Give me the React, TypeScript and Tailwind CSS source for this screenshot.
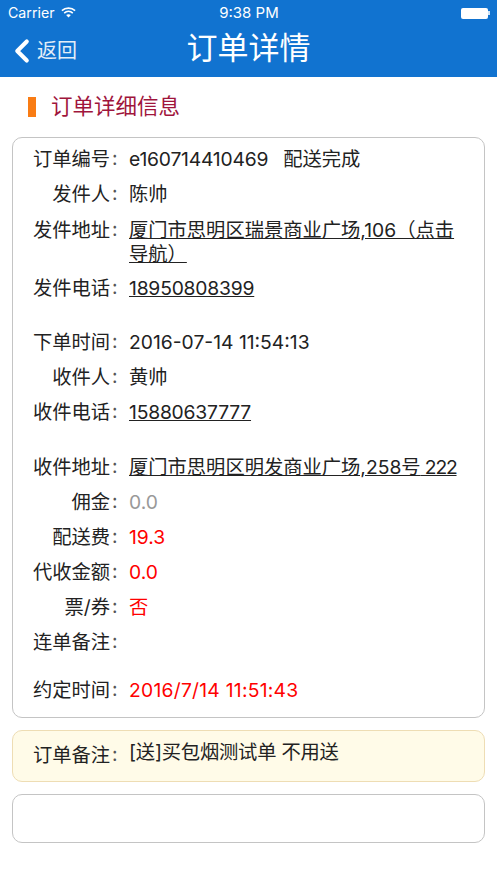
import { ChevronLeft } from 'lucide-react'

const font = "font-['Inter','Noto_Sans_CJK_SC',sans-serif]"

type RowProps = {
  label: string
  children?: React.ReactNode
  className?: string
}

function Row({ label, children, className = '' }: RowProps) {
  return (
    <div className={`flex text-[19.3px] leading-[24px] text-[#222] ${className}`}>
      <div className="w-[88px] shrink-0 text-right whitespace-nowrap">{label}</div>
      <div className="w-[19px] shrink-0 pl-[2px] text-[#555] -translate-y-[1px]">:</div>
      <div className="w-[336px]">{children}</div>
    </div>
  )
}

function Wifi() {
  return (
    <svg width="15" height="11" viewBox="0 0 16 12" fill="none" stroke="white" strokeWidth="1.7">
      <path d="M0.8 4 C4.8 0.3 11.2 0.3 15.2 4" />
      <path d="M3.3 6.6 C6 4.2 10 4.2 12.7 6.6" />
      <path d="M8 11.5 L5.4 8.8 C7 7.6 9 7.6 10.6 8.8 Z" fill="white" stroke="none" />
    </svg>
  )
}

export default function App() {
  return (
    <div className={`w-[497px] h-[883px] bg-white overflow-hidden ${font}`}>
      <header className="h-[77px] bg-[#1173d0] text-white">
        <div className="h-[26px] grid grid-cols-[1fr_auto_1fr] items-center pl-[8px] pr-[7px] text-[14.2px]">
          <div className="flex items-center gap-[6px]">
            <span>Carrier</span>
            <Wifi />
          </div>
          <span className="text-[15px]">9:38 PM</span>
          <div className="flex items-center justify-end">
            <div className="w-[27px] h-[11px] rounded-[2px] bg-white" />
            <div className="w-[2px] h-[4px] bg-white/80" />
          </div>
        </div>
        <div className="relative h-[51px] flex items-center justify-center">
          <div className="absolute left-[7px] top-[6px] flex items-center">
            <ChevronLeft size={38} strokeWidth={2.6} className="-ml-[4px]" />
            <span className="-ml-[4px] text-[20px] leading-[24px] text-[#e4eef8]">返回</span>
          </div>
          <h1 className="text-[31px] leading-[40px] font-normal -mt-[8px]">订单详情</h1>
        </div>
      </header>

      <div className="h-[60px] flex items-center pl-[28px]">
        <div className="w-[8px] h-[20px] bg-[#f97c14]" />
        <h2 className="ml-[15px] -mt-[2px] text-[21.5px] leading-[28px] font-normal text-[#a0153c]">订单详细信息</h2>
      </div>

      <section className="mx-[12px] h-[581px] rounded-[10px] border border-[#c4c4c4] pt-[9px] pl-[9px]">
        <Row label="订单编号">
          <span className="tracking-[-0.2px]">e160714410469</span>
          <span className="ml-[15px]">配送完成</span>
        </Row>
        <Row label="发件人" className="mt-[11px]">陈帅</Row>
        <Row label="发件地址" className="mt-[12px]">
          <span className="underline">厦门市思明区瑞景商业广场,106（点击导航）</span>
        </Row>
        <Row label="发件电话" className="mt-[10px]">
          <span className="underline tracking-[-0.2px]">18950808399</span>
        </Row>
        <Row label="下单时间" className="mt-[30px]">2016-07-14 11:54:13</Row>
        <Row label="收件人" className="mt-[11px]">黄帅</Row>
        <Row label="收件电话" className="mt-[11px]">
          <span className="underline tracking-[-0.2px]">15880637777</span>
        </Row>
        <Row label="收件地址" className="mt-[31px]">
          <span className="underline">
            厦门市思明区明发商业广场,258号<span className="tracking-[-1.2px]"> 222</span>
          </span>
        </Row>
        <Row label="佣金" className="mt-[11px]">
          <span className="text-[#999]">0.0</span>
        </Row>
        <Row label="配送费" className="mt-[11px]">
          <span className="text-[#f00]">19.3</span>
        </Row>
        <Row label="代收金额" className="mt-[11px]">
          <span className="text-[#f00]">0.0</span>
        </Row>
        <Row label="票/券" className="mt-[11px]">
          <span className="text-[#f00]">否</span>
        </Row>
        <Row label="连单备注" className="mt-[11px]" />
        <Row label="约定时间" className="mt-[24px]">
          <span className="text-[#f00] tracking-[0.25px]">2016/7/14 11:51:43</span>
        </Row>
      </section>

      <section className="mx-[12px] mt-[12px] h-[52px] rounded-[10px] border border-[#eeddb4] bg-[#fffbe8] pt-[12px] pl-[9px]">
        <Row label="订单备注">
          <span className="relative -top-[3px] tracking-[-0.2px]">[送]买包烟测试单 不用送</span>
        </Row>
      </section>

      <section className="mx-[12px] mt-[12px] h-[49px] rounded-[10px] border border-[#c4c4c4]" />
    </div>
  )
}
